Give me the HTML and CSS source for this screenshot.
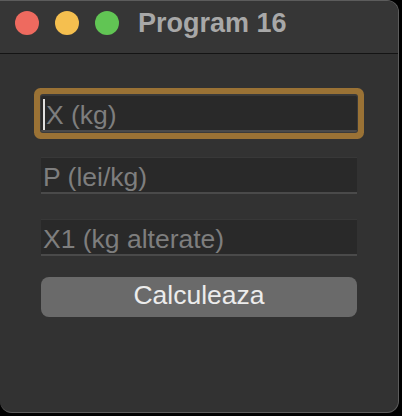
FILE: index.html
```
<!DOCTYPE html>
<html>
<head>
<meta charset="utf-8">
<link rel="stylesheet" href="styles.css">
</head>
<body>
<div class="window">
  <div class="titlebar">
    <span class="light red"></span>
    <span class="light yellow"></span>
    <span class="light green"></span>
    <span class="title">Program 16</span>
  </div>
  <div class="content">
    <div class="field focused"><span class="caret"></span>X (kg)</div>
    <div class="field">P (lei/kg)</div>
    <div class="field">X1 (kg alterate)</div>
    <div class="button">Calculeaza</div>
  </div>
</div>
</body>
</html>
```
FILE: styles.css
```
html, body {
  margin: 0;
  padding: 0;
  background: #000;
  width: 402px;
  height: 416px;
  overflow: hidden;
  font-family: "Liberation Sans", Arial, sans-serif;
}
.window {
  width: 399px;
  height: 413px;
  background: #323232;
  border: 1px solid #5c5c5c;
  border-left: none;
  border-radius: 0 12px 12px 12px;
  box-sizing: border-box;
  overflow: hidden;
}
.titlebar {
  height: 53px;
  box-sizing: border-box;
  background: #363636;
  border-bottom: 1px solid #141414;
  display: flex;
  align-items: flex-start;
  padding-left: 15px;
}
.light {
  width: 24px;
  height: 24px;
  border-radius: 50%;
  margin-top: 10px;
  margin-right: 16px;
}
.red { background: #ee6a5f; }
.yellow { background: #f5bf4f; }
.green { background: #61c554; margin-right: 19px; }
.title {
  font-weight: bold;
  font-size: 27px;
  line-height: 30px;
  margin-top: 7px;
  color: #a8a8a8;
}
.content {
  padding: 41px 0 0 41px;
  display: flex;
  flex-direction: column;
}
.field {
  width: 316px;
  height: 37px;
  box-sizing: border-box;
  background: #292929;
  border-top: 1px solid #383838;
  border-bottom: 2px solid #4a4a4a;
  padding: 1px 0 0 2px;
  font-size: 26.5px;
  line-height: 36px;
  color: #7e7e7e;
  margin-bottom: 25px;
  display: flex;
  align-items: flex-start;
  white-space: nowrap;
}
.field.focused {
  border-radius: 2px;
  box-shadow: 0 0 0 1px #3a3a3a, 0 0 0 7px #9a7235;
}
.caret {
  width: 2px;
  height: 31px;
  margin-top: 2px;
  margin-right: 1px;
  background: #e0e0e0;
}
.button {
  width: 316px;
  height: 40px;
  box-sizing: border-box;
  margin-top: -4px;
  background: #6a6a6a;
  border-radius: 8px;
  color: #ececec;
  font-size: 26.5px;
  line-height: 36px;
  padding-bottom: 4px;
  text-align: center;
}
```
